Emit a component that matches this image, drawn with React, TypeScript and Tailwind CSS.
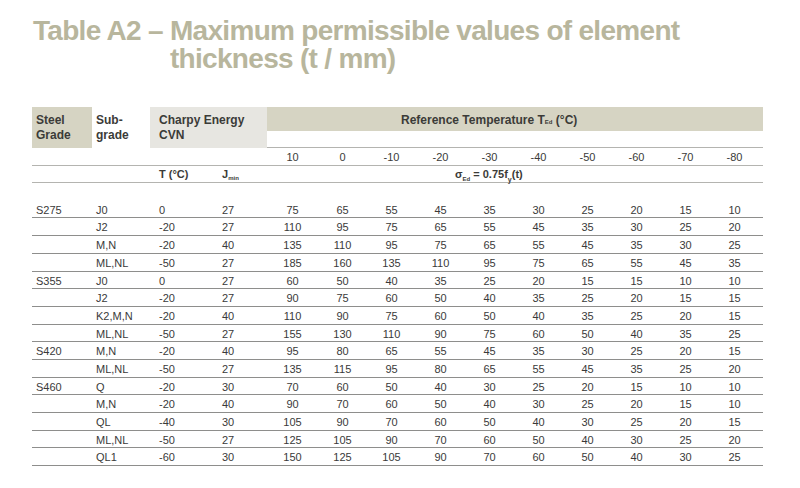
const COLS = "grid grid-cols-[60px_58px_60px_57px_51px_repeat(8,49px)_53px]";

const TEMPS = ["10", "0", "-10", "-20", "-30", "-40", "-50", "-60", "-70", "-80"];

const ROWS: [string, string, string, string, number[]][] = [
  ["S275", "J0", "0", "27", [75, 65, 55, 45, 35, 30, 25, 20, 15, 10]],
  ["", "J2", "-20", "27", [110, 95, 75, 65, 55, 45, 35, 30, 25, 20]],
  ["", "M,N", "-20", "40", [135, 110, 95, 75, 65, 55, 45, 35, 30, 25]],
  ["", "ML,NL", "-50", "27", [185, 160, 135, 110, 95, 75, 65, 55, 45, 35]],
  ["S355", "J0", "0", "27", [60, 50, 40, 35, 25, 20, 15, 15, 10, 10]],
  ["", "J2", "-20", "27", [90, 75, 60, 50, 40, 35, 25, 20, 15, 15]],
  ["", "K2,M,N", "-20", "40", [110, 90, 75, 60, 50, 40, 35, 25, 20, 15]],
  ["", "ML,NL", "-50", "27", [155, 130, 110, 90, 75, 60, 50, 40, 35, 25]],
  ["S420", "M,N", "-20", "40", [95, 80, 65, 55, 45, 35, 30, 25, 20, 15]],
  ["", "ML,NL", "-50", "27", [135, 115, 95, 80, 65, 55, 45, 35, 25, 20]],
  ["S460", "Q", "-20", "30", [70, 60, 50, 40, 30, 25, 20, 15, 10, 10]],
  ["", "M,N", "-20", "40", [90, 70, 60, 50, 40, 30, 25, 20, 15, 10]],
  ["", "QL", "-40", "30", [105, 90, 70, 60, 50, 40, 30, 25, 20, 15]],
  ["", "ML,NL", "-50", "27", [125, 105, 90, 70, 60, 50, 40, 30, 25, 20]],
  ["", "QL1", "-60", "30", [150, 125, 105, 90, 70, 60, 50, 40, 30, 25]],
];

export default function App() {
  return (
    <div className="w-[800px] h-[488px] bg-white overflow-hidden font-['Liberation_Sans',Arial,sans-serif]">
      {/* title */}
      <div className="flex pt-[17px] pl-[33px] text-[28px] leading-[27.6px] font-bold tracking-[-0.7px] text-[#b8b69d]">
        <span className="w-[137px] shrink-0 whitespace-nowrap">Table A2 –</span>
        <span className="whitespace-nowrap">
          Maximum permissible values of element
          <br />
          thickness (t / mm)
        </span>
      </div>

      <div className="ml-[32px] mt-[35px] w-[731px] text-[#333]">
        {/* header row 1 */}
        <div className={`${COLS} h-[41px] text-[12px] leading-[15px] font-bold text-[#3b3b38]`}>
          <div className="bg-[#d6d4c3] pl-[4px] pt-[6px]">
            Steel
            <br />
            Grade
          </div>
          <div className="pl-[4px] pt-[6px]">
            Sub-
            <br />
            grade
          </div>
          <div className="col-span-2 bg-[#e7e6e1] pl-[9px] pt-[6px]">
            Charpy Energy
            <br />
            CVN
          </div>
          <div className="col-span-10 flex flex-col border-b border-[#b4b4b0]">
            <div className="h-[24px] bg-[#d6d4c3] pl-[134px] pt-[2px] flex items-center">
              Reference Temperature T<sub className="text-[6px] align-[-1px]">Ed</sub>&nbsp;(°C)
            </div>
          </div>
        </div>

        {/* temperatures */}
        <div className={`${COLS} h-[18px] border-b border-[#b4b4b0] text-[11px] leading-[18px] text-[#3b3b38]`}>
          <div className="col-span-4" />
          {TEMPS.map((t, i) => (
            <div key={t} className={i === 9 ? "text-center pr-[4px]" : "text-center"}>
              {t}
            </div>
          ))}
        </div>

        {/* units */}
        <div className={`${COLS} h-[17px] border-b border-[#b4b4b0] text-[11px] leading-[16px] font-bold text-[#3b3b38]`}>
          <div className="col-span-2" />
          <div className="pl-[9px]">T (°C)</div>
          <div className="pl-[12px]">
            J<sub className="text-[6px] align-[0px]">min</sub>
          </div>
          <div className="col-span-10 pl-[188px]">
            σ<sub className="text-[6px] align-[-1px]">Ed</sub> = 0.75f<sub className="text-[7px] align-[-2px]">y</sub>(t)
          </div>
        </div>

        {/* data */}
        <div className="mt-[17.6px]">
          {ROWS.map(([grade, sub, t, j, vals], r) => (
            <div
              key={r}
              className={`${COLS} h-[17.7px] border-b border-[#8e8e8c] text-[11px] leading-[13.7px] pt-[3px] text-[#3a3a3a]`}
            >
              <div className="pl-[4px]">{grade}</div>
              <div className="pl-[4px]">{sub}</div>
              <div className="pl-[9px]">{t}</div>
              <div className="pl-[12px]">{j}</div>
              {vals.map((v, i) => (
                <div key={i} className={i === 9 ? "text-center pr-[4px]" : "text-center"}>
                  {v}
                </div>
              ))}
            </div>
          ))}
        </div>
      </div>
    </div>
  );
}
